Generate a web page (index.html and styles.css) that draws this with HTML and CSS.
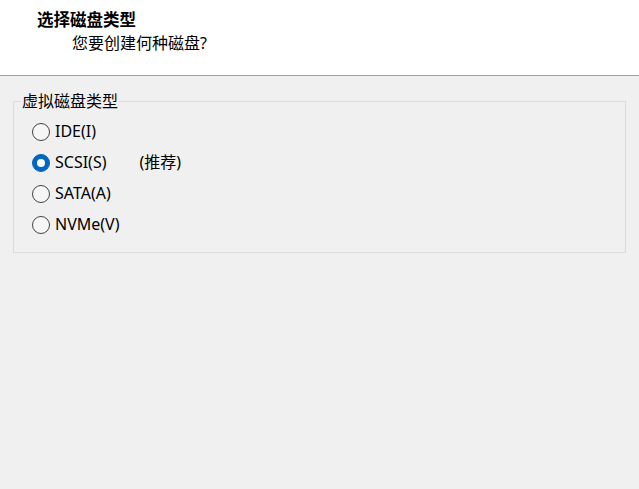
FILE: index.html
```html
<!DOCTYPE html>
<html lang="zh-CN">
<head>
<meta charset="utf-8">
<link rel="stylesheet" href="styles.css">
</head>
<body>
<div class="header">
  <div class="title">选择磁盘类型</div>
  <div class="subtitle">您要创建何种磁盘?</div>
</div>
<div class="content">
  <fieldset class="group">
    <legend class="legend">虚拟磁盘类型</legend>
    <div class="options">
      <label class="opt"><span class="radio"></span><span class="lbl">IDE(I)</span></label>
      <label class="opt"><span class="radio checked"></span><span class="lbl">SCSI(S)</span><span class="rec">(推荐)</span></label>
      <label class="opt"><span class="radio"></span><span class="lbl">SATA(A)</span></label>
      <label class="opt"><span class="radio"></span><span class="lbl">NVMe(V)</span></label>
    </div>
  </fieldset>
</div>
</body>
</html>
```
FILE: styles.css
```css
html, body {
  margin: 0;
  padding: 0;
  width: 639px;
  height: 489px;
  overflow: hidden;
  background: #f0f0f0;
  font-family: "Noto Sans", "Noto Sans CJK SC", sans-serif;
  font-size: 16px;
  color: #000;
}
.header {
  background: #fff;
  height: 76px;
  border-bottom: 1px solid #a0a0a0;
  box-sizing: border-box;
  padding: 10px 0 0 37px;
}
.title {
  font-weight: bold;
  font-size: 16.5px;
  line-height: 20px;
}
.subtitle {
  margin-left: 35px;
  margin-top: 3px;
  line-height: 20px;
}
.content {
  padding: 16px 13px 0 13px;
}
.group {
  margin: 0;
  border: 1px solid #dcdcdc;
  padding: 0;
}
.legend {
  padding: 0 1px;
  margin-left: 7px;
  line-height: 18px;
}
.options {
  display: flex;
  flex-direction: column;
  gap: 10px;
  padding: 11px 0 17px 18px;
}
.opt {
  display: flex;
  align-items: center;
  height: 21px;
  line-height: 21px;
}
.radio {
  width: 18px;
  height: 18px;
  box-sizing: border-box;
  border: 1px solid #444;
  border-radius: 50%;
  background: #f6f6f6;
  margin-right: 5px;
  position: relative;
}
.radio.checked {
  background: #0067c0;
  border-color: #0067c0;
}
.radio.checked::after {
  content: "";
  position: absolute;
  left: 4px;
  top: 4px;
  width: 8px;
  height: 8px;
  border-radius: 50%;
  background: #fff;
}
.rec {
  margin-left: 33px;
}
```
